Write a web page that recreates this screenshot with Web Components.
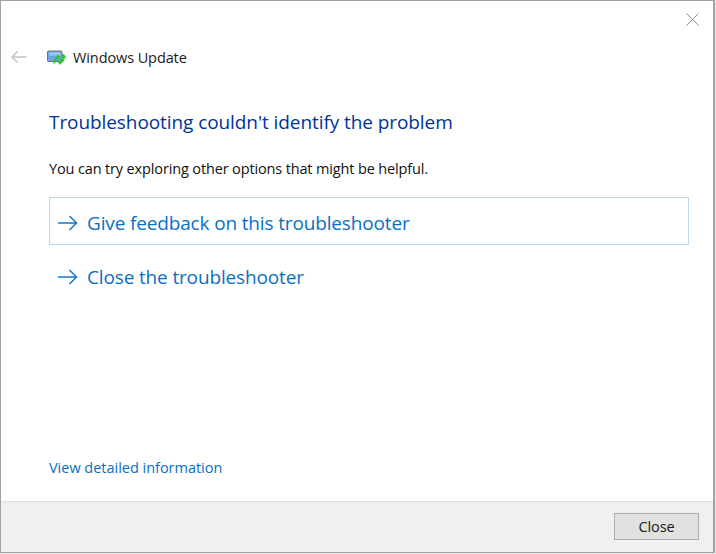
<!DOCTYPE html>
<html><head><meta charset="utf-8"><style>
html,body{margin:0;padding:0;background:#e9e9e9;overflow:hidden}
body{font-family:"Open Sans","Noto Sans",sans-serif;width:716px;height:554px}
</style></head><body>
<template id="t-link"><style>
:host{display:flex;align-items:center;box-sizing:border-box;height:48px;padding-left:7px;padding-top:4px;gap:9px;border:1px solid transparent;color:#0a6fc2;font-size:19px;letter-spacing:-.15px}
:host([focused]){border-color:#bcd9ea}
svg{width:21px;height:16px;flex:none}
</style><svg viewBox="0 0 21 16"><path d="M1 8H19.500M12.500 1L19.500 8L12.500 15" fill="none" stroke="#1477c8" stroke-width="1.5"/></svg><span><slot></slot></span></template>

<template id="t-header"><style>
:host{display:flex;align-items:center;height:20px;margin-top:46px;padding-left:9px;font-size:14.5px;letter-spacing:-.1px;color:#1a1a1a}
.back{width:18px;height:14px;margin-right:19px;flex:none}
.ico{width:20px;height:16px;margin-right:6px;flex:none}
</style>
<svg class="back" viewBox="0 0 18 14"><path d="M16.500 7H2M7.500 1.500L2 7L7.500 12.500" fill="none" stroke="#c6c6c6" stroke-width="1.6"/></svg>
<svg class="ico" viewBox="0 0 20 16"><rect x=".5" y="2" width="14.500" height="10.500" rx="1" fill="#6aa6e0" stroke="#6d7378"/><path d="M2 3.500h11.500v3h-11.500z" fill="#9ccaf0"/><path d="M7.500 14.500C6.800 11.500 8.500 8.500 11 8" fill="none" stroke="#2ec52e" stroke-width="2"/><path d="M10 5l3.500 3-3.500 3z" fill="#2ec52e"/><path d="M16.500 7.500C17.500 10.500 15.500 13 13.500 13.300" fill="none" stroke="#2ec52e" stroke-width="2"/><path d="M14 10.300l-3.500 3 3.500 2.700zM13.500 8.500h6.200L16.500 4.800z" fill="#2ec52e"/></svg>
<span><slot></slot></span></template>

<template id="t-window"><style>
:host{display:flex;flex-direction:column;box-sizing:border-box;width:715px;height:553px;background:#fff;border:1px solid #a3a3a3;border-right-width:2px;border-bottom-width:1px;position:relative;color:#1a1a1a}
.close{position:absolute;top:12px;right:14px;width:13px;height:13px}
main{flex:1;display:flex;flex-direction:column;min-height:0}
footer{height:51px;box-sizing:border-box;background:#f0f0f0;border-top:1px solid #dfdfdf;display:flex;align-items:center;justify-content:flex-end;padding-right:14px;padding-bottom:1px}
</style>
<svg class="close" viewBox="0 0 13 13"><path d="M.5.5L12.500 12.500M12.500.5L.5 12.500" stroke="#8a8a8a" stroke-width="1" fill="none"/></svg>
<main><slot></slot></main><footer><slot name="footer"></slot></footer></template>

<template id="t-body"><style>
:host{display:flex;flex-direction:column;flex:1;padding-left:48px;padding-right:24px}
h1{margin:41px 0 0;font-weight:400;font-size:19px;line-height:28px;letter-spacing:-.08px;color:#003399}
p{margin:23px 0 0;font-size:14.5px;line-height:20px;letter-spacing:-.14px;color:#111}
.links{margin-top:18px;display:flex;flex-direction:column;gap:6px}
.more{margin-top:auto;margin-bottom:23px;font-size:14.5px;line-height:20px;letter-spacing:-.02px;color:#0a6fc2}
</style>
<h1>Troubleshooting couldn't identify the problem</h1>
<p>You can try exploring other options that might be helpful.</p>
<div class="links"><slot></slot></div>
<div class="more">View detailed information</div></template>

<template id="t-btn"><style>
:host{display:flex;align-items:center;justify-content:center;box-sizing:border-box;width:85px;height:27px;background:#e1e1e1;border:1px solid #adadad;font-size:14.5px;color:#1a1a1a;letter-spacing:-.1px}
</style><slot></slot></template>

<script>
for (const [name,id] of [["tb-window","t-window"],["tb-header","t-header"],["tb-body","t-body"],["tb-link","t-link"],["tb-button","t-btn"]]) {
  customElements.define(name, class extends HTMLElement {
    constructor(){super();this.attachShadow({mode:"open"}).appendChild(document.getElementById(id).content.cloneNode(true));}
  });
}
</script>
<tb-window>
  <tb-header>Windows Update</tb-header>
  <tb-body>
    <tb-link focused>Give feedback on this troubleshooter</tb-link>
    <tb-link>Close the troubleshooter</tb-link>
  </tb-body>
  <tb-button slot="footer">Close</tb-button>
</tb-window>
</body></html>
